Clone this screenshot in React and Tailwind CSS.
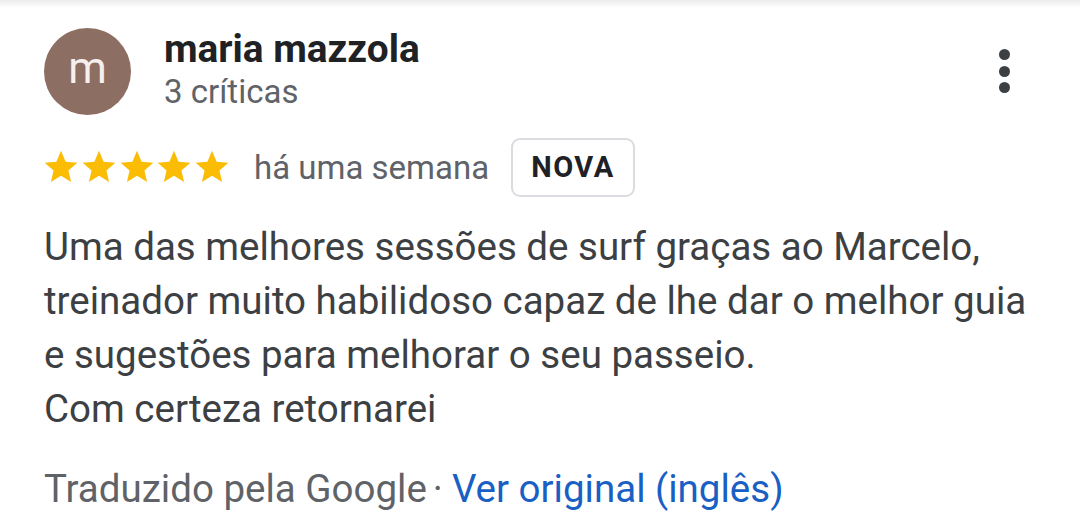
import React from "react";

const Star = () => (
  <svg viewBox="1 1.5 22 22" className="w-[36px] h-[36px] fill-[#fbbc04]">
    <path d="M12 17.27L18.18 21l-1.64-7.03L22 9.24l-7.19-.61L12 2 9.19 8.63 2 9.24l5.46 4.73L5.82 21z" />
  </svg>
);

export default function App() {
  return (
    <div className="w-[1080px] h-[530px] bg-white overflow-hidden font-['Roboto',sans-serif]">
      <div className="h-[8px] bg-gradient-to-b from-[#ececec] to-white" />
      <div className="pl-[44px] pr-[50px]">
        {/* header */}
        <div className="flex items-start pt-[20px]">
          <div className="w-[87px] h-[87px] rounded-full bg-[#8d6e63] flex items-center justify-center text-[#f5f0ee] text-[44px] leading-none pb-[8px]">
            m
          </div>
          <div className="ml-[33px] flex-1 pt-[1px]">
            <div className="text-[38.8px] font-bold text-[#202124] leading-[40px]">maria mazzola</div>
            <div className="mt-[4px] text-[33px] text-[#5f6368] leading-[38px]">3 críticas</div>
          </div>
          <div className="flex flex-col gap-[5.5px] items-center pt-[21px] pr-[20px]">
            <span className="w-[11px] h-[11px] rounded-full bg-[#3c4043]" />
            <span className="w-[11px] h-[11px] rounded-full bg-[#3c4043]" />
            <span className="w-[11px] h-[11px] rounded-full bg-[#3c4043]" />
          </div>
        </div>

        {/* rating row */}
        <div className="flex items-center mt-[23px]">
          <div className="flex gap-[1.75px] -ml-[1px]">
            <Star />
            <Star />
            <Star />
            <Star />
            <Star />
          </div>
          <span className="ml-[24px] text-[33px] text-[#5f6368]">há uma semana</span>
          <span className="ml-[22px] h-[59px] px-[18px] flex items-center border-2 border-[#dadce0] rounded-[9px] text-[29px] font-bold tracking-[1.5px] text-[#202124]">
            NOVA
          </span>
        </div>

        {/* review */}
        <p className="mt-[23px] text-[38.5px] leading-[54px] text-[#3c4043] whitespace-nowrap">
          Uma das melhores sessões de surf graças ao Marcelo,
          <br />
          treinador muito habilidoso capaz de lhe dar o melhor guia
          <br />
          e sugestões para melhorar o seu passeio.
          <br />
          Com certeza retornarei
        </p>

        <p className="mt-[26px] text-[38.5px] leading-[54px] text-[#5f6368] whitespace-nowrap">
          Traduzido pela Google<span className="ml-[6px] mr-[9px]">·</span>
          <span className="text-[#1a5fc4]">Ver original (inglês)</span>
        </p>
      </div>
    </div>
  );
}
